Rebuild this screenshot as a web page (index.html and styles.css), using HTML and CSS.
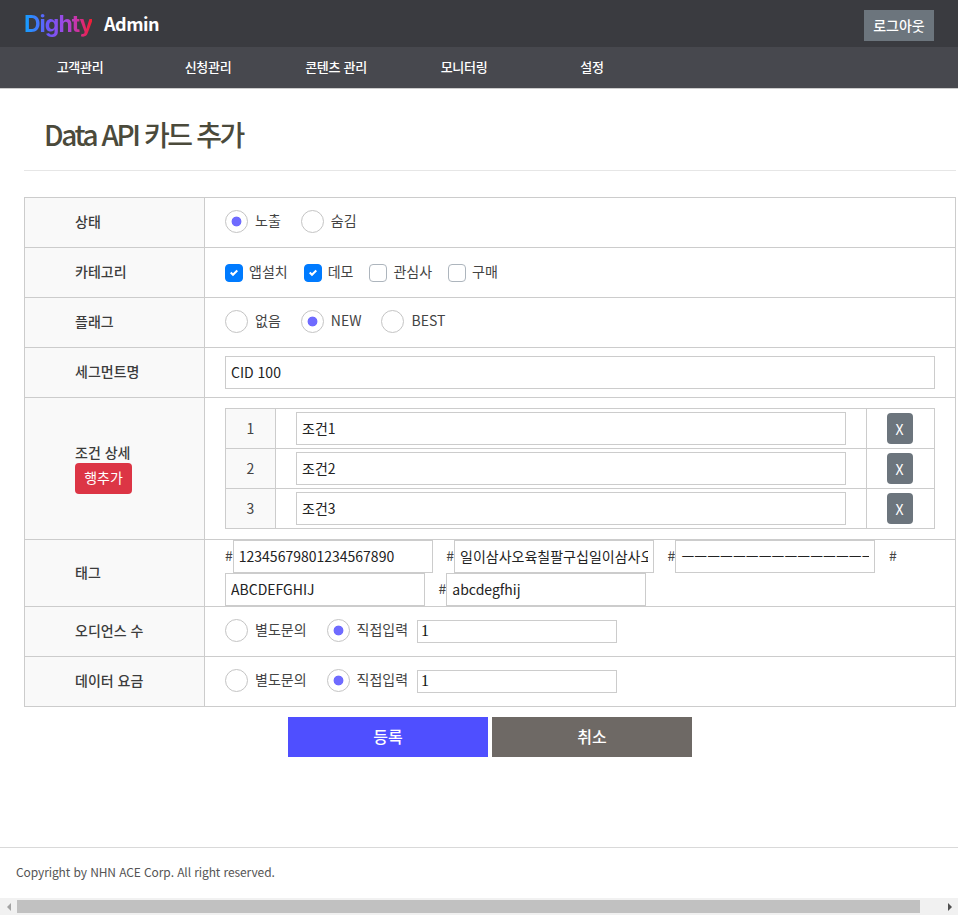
FILE: index.html
```html
<!DOCTYPE html>
<html lang="ko">
<head>
    <meta charset="UTF-8">
    <meta name="viewport" content="width=device-width, initial-scale=1.0">
    <title>Data API 카드 추가</title>
    <link rel="stylesheet" href="styles.css">
</head>
<body>
    <header class="top-bar">
        <div class="logo"><span class="logo-mark">Dighty</span><span class="logo-admin">Admin</span></div>
        <button class="logout-btn">로그아웃</button>
    </header>
    <nav class="main-nav">
        <a href="#">고객관리</a>
        <a href="#">신청관리</a>
        <a href="#">콘텐츠 관리</a>
        <a href="#">모니터링</a>
        <a href="#">설정</a>
    </nav>

    <main class="content">
        <h1 class="page-title">Data API 카드 추가</h1>

        <table class="form-table">
            <tr class="row">
                <th>상태</th>
                <td>
                    <div class="options">
                        <label class="radio checked">노출</label>
                        <label class="radio">숨김</label>
                    </div>
                </td>
            </tr>
            <tr class="row">
                <th>카테고리</th>
                <td>
                    <div class="options">
                        <label class="check checked">앱설치</label>
                        <label class="check checked">데모</label>
                        <label class="check">관심사</label>
                        <label class="check">구매</label>
                    </div>
                </td>
            </tr>
            <tr class="row">
                <th>플래그</th>
                <td>
                    <div class="options">
                        <label class="radio">없음</label>
                        <label class="radio checked">NEW</label>
                        <label class="radio">BEST</label>
                    </div>
                </td>
            </tr>
            <tr class="row">
                <th>세그먼트명</th>
                <td><input class="text-input wide" type="text" value="CID 100"></td>
            </tr>
            <tr>
                <th>
                    조건 상세
                    <button class="btn-add">행추가</button>
                </th>
                <td class="detail-cell">
                    <table class="detail-table">
                        <tr>
                            <td class="num">1</td>
                            <td class="cond"><input class="text-input" type="text" value="조건1"></td>
                            <td class="del"><button class="btn-del">X</button></td>
                        </tr>
                        <tr>
                            <td class="num">2</td>
                            <td class="cond"><input class="text-input" type="text" value="조건2"></td>
                            <td class="del"><button class="btn-del">X</button></td>
                        </tr>
                        <tr>
                            <td class="num">3</td>
                            <td class="cond"><input class="text-input" type="text" value="조건3"></td>
                            <td class="del"><button class="btn-del">X</button></td>
                        </tr>
                    </table>
                </td>
            </tr>
            <tr>
                <th>태그</th>
                <td class="tag-cell">
                    #<input class="tag-input" type="text" value="12345679801234567890">
                    #<input class="tag-input" type="text" value="일이삼사오육칠팔구십일이삼사오육칠팔구십">
                    #<input class="tag-input" type="text" value="ㅡㅡㅡㅡㅡㅡㅡㅡㅡㅡㅡㅡㅡㅡㅡㅡㅡㅡㅡㅡ">
                    #<input class="tag-input" type="text" value="ABCDEFGHIJ">
                    #<input class="tag-input" type="text" value="abcdegfhij">
                </td>
            </tr>
            <tr class="row">
                <th>오디언스 수</th>
                <td>
                    <div class="options">
                        <label class="radio">별도문의</label>
                        <label class="radio checked tight">직접입력</label>
                        <input class="small-input" type="text" value="1">
                    </div>
                </td>
            </tr>
            <tr class="row">
                <th>데이터 요금</th>
                <td>
                    <div class="options">
                        <label class="radio">별도문의</label>
                        <label class="radio checked tight">직접입력</label>
                        <input class="small-input" type="text" value="1">
                    </div>
                </td>
            </tr>
        </table>

        <div class="actions">
            <button class="btn-submit">등록</button>
            <button class="btn-cancel">취소</button>
        </div>
    </main>

    <footer class="footer">Copyright by NHN ACE Corp. All right reserved.</footer>

    <div class="scrollbar">
        <span class="arrow left"></span>
        <div class="track"><div class="thumb"></div></div>
        <span class="arrow right"></span>
    </div>
</body>
</html>
```

FILE: styles.css
```css
* {
    box-sizing: border-box;
}
html, body {
    height: 100%;
}
body {
    margin: 0;
    display: flex;
    flex-direction: column;
    height: 100vh;
    overflow: hidden;
    font-family: "Noto Sans CJK KR", "Noto Sans", sans-serif;
    font-size: 14px;
    line-height: 1.5;
    color: #444;
    background: #fff;
}
button {
    font-family: inherit;
    border: none;
    cursor: pointer;
}
input {
    font-family: inherit;
    font-size: 14px;
    color: #222;
    background: #fff;
    outline: none;
}

/* header */
.top-bar {
    height: 47px;
    flex: none;
    display: flex;
    justify-content: space-between;
    align-items: center;
    padding: 0 24px;
    background: #3a3b40;
}
.logo {
    display: flex;
    align-items: center;
}
.logo-mark {
    width: 68px;
    font-family: "Inter", sans-serif;
    font-size: 23px;
    line-height: 28px;
    font-weight: 700;
    letter-spacing: -1px;
    background: linear-gradient(90deg, #0fa2ff 0%, #6a58fa 35%, #a447e0 62%, #d0309a 80%, #f21c30 100%);
    -webkit-background-clip: text;
    background-clip: text;
    color: transparent;
}
.logo-admin {
    margin-left: 12px;
    font-size: 18px;
    font-weight: 700;
    letter-spacing: -0.5px;
    color: #fff;
}
.logout-btn {
    width: 70px;
    height: 31px;
    margin-top: 4px;
    padding: 0 0 2px;
    font-size: 14px;
    font-weight: 500;
    color: #fff;
    background: #6c757d;
}
.main-nav {
    flex: none;
    height: 42px;
    display: flex;
    padding: 0 16px 1px;
    background: #47484e;
    border-bottom: 1px solid #ccc;
}
.main-nav a {
    width: 128px;
    text-align: center;
    line-height: 40px;
    font-size: 13px;
    font-weight: 500;
    letter-spacing: -0.3px;
    color: #fff;
    text-decoration: none;
}

/* content */
.content {
    flex: 1;
    width: 980px;
    padding: 0 24px;
}
.page-title {
    margin: 0 0 26px;
    height: 82px;
    padding: 18px 0 0 20px;
    font-size: 28px;
    line-height: 54px;
    font-weight: 500;
    letter-spacing: -2.4px;
    color: #4b4a3b;
    border-bottom: 1px solid #e6e6e6;
}
.form-table {
    width: 932px;
    border-collapse: collapse;
    table-layout: fixed;
}
.form-table > tbody > tr > th,
.form-table > tbody > tr > td {
    border: 1px solid #ccc;
    padding: 0 20px;
}
.form-table > tbody > tr > th {
    width: 180px;
    padding: 0 20px 2px 50px;
    text-align: left;
    font-weight: 500;
    color: #3c3c3c;
    background: #f9f9f9;
}
.row {
    height: 50px;
}
.options {
    display: flex;
    align-items: center;
    padding-bottom: 4px;
}
.radio {
    display: flex;
    align-items: center;
    margin-right: 20px;
}
.radio.tight {
    margin-right: 9px;
}
.radio::before {
    content: "";
    width: 21px;
    height: 21px;
    margin: 2px 7px 0 0;
    border: 1px solid #c4c4c4;
    border-radius: 50%;
    background: #fff;
}
.radio.checked::before {
    background: radial-gradient(circle, #6f6bff 0, #6f6bff 4.5px, #fff 5.3px);
}
.check {
    display: flex;
    align-items: center;
    margin: 0 16px 0 0;
    line-height: 20px;
}
.check::before {
    content: "";
    width: 16px;
    height: 16px;
    margin: 4px 6px 0 0;
    border: 1px solid #adb5bd;
    border-radius: 4px;
    background: #fff;
}
.check.checked::before {
    border-color: #007bff;
    background: #007bff url("data:image/svg+xml,%3Csvg xmlns='http://www.w3.org/2000/svg' viewBox='0 0 8 8'%3E%3Cpath fill='%23fff' d='M6.564.75l-3.59 3.612-1.538-1.55L0 4.26l2.974 2.99L8 2.193z'/%3E%3C/svg%3E") center / 8px 8px no-repeat;
}
.text-input {
    display: block;
    width: 100%;
    height: 33px;
    padding: 0 5px 2px;
    border: 1px solid #ccc;
}
.btn-add {
    display: block;
    width: 57px;
    height: 31px;
    padding: 0 0 2px;
    font-size: 14px;
    color: #fff;
    background: #dc3545;
    border-radius: 4px;
}

/* condition rows */
.form-table > tbody > tr > td.detail-cell {
    padding: 10px 20px;
}
.detail-table {
    width: 100%;
    border-collapse: collapse;
    table-layout: fixed;
}
.detail-table td {
    height: 40px;
    border: 1px solid #ccc;
}
.detail-table .num {
    width: 50px;
    text-align: center;
    background: #f9f9f9;
}
.detail-table .cond {
    padding: 0 20px;
}
.detail-table .del {
    width: 68px;
    padding: 0;
}
.btn-del {
    display: block;
    width: 26px;
    height: 31px;
    margin-left: 20px;
    padding: 0 1px 0 0;
    font-size: 14px;
    color: #fff;
    background: #6c757d;
    border-radius: 4px;
}

/* tags */
.form-table > tbody > tr > td.tag-cell {
    padding: 0 20px;
    height: 67px;
    font-size: 14px;
    line-height: 31px;
}
.tag-input {
    width: 200px;
    height: 33px;
    margin-right: 9.6px;
    padding: 0 5px 2px;
    border: 1px solid #ccc;
    vertical-align: top;
}
.small-input {
    width: 200px;
    height: 23px;
    margin-top: 4px;
    padding: 0 3px 2px;
    border: 1px solid #ccc;
    font-family: "Liberation Serif", serif;
    font-size: 16px;
    color: #111;
}

/* bottom */
.actions {
    display: flex;
    justify-content: center;
    gap: 4px;
    margin-top: 10px;
}
.actions button {
    width: 200px;
    height: 40px;
    padding: 0 0 2px;
    font-size: 16px;
    font-weight: 500;
    color: #fff;
}
.btn-submit {
    background: #4f4fff;
}
.btn-cancel {
    background: #6e6965;
}
.footer {
    flex: none;
    height: 51px;
    padding: 15px 16px 0;
    border-top: 1px solid #d9d9d9;
    font-size: 12px;
    letter-spacing: -0.1px;
    color: #555;
}

/* horizontal scroll strip */
.scrollbar {
    flex: none;
    height: 17px;
    display: flex;
    align-items: center;
    background: #f1f1f1;
}
.track {
    flex: 1;
    height: 100%;
    padding: 2px 0;
}
.thumb {
    width: 903px;
    height: 100%;
    background: #c1c1c1;
}
.arrow {
    width: 17px;
    display: flex;
    justify-content: center;
}
.arrow::before {
    content: "";
    border: 4px solid transparent;
}
.arrow.left::before {
    border-left-width: 0;
    border-right-color: #a3a3a3;
}
.arrow.right::before {
    border-right-width: 0;
    border-left-color: #505050;
}
```
